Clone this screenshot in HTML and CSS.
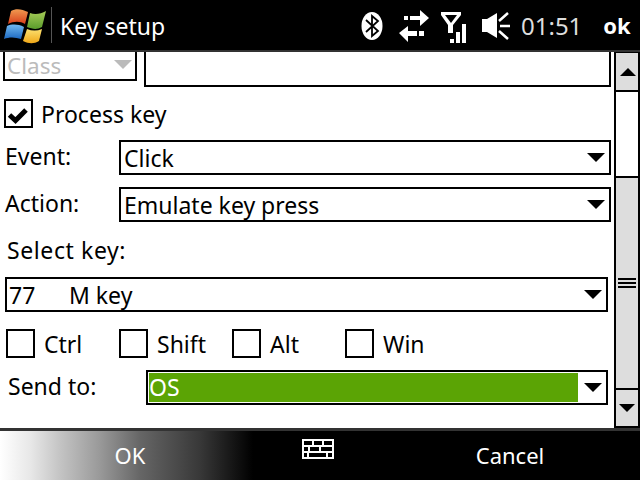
FILE: index.html
```html
<!DOCTYPE html>
<html lang="en">
<head>
    <meta charset="UTF-8">
    <title>Key setup</title>
    <link rel="stylesheet" href="styles.css">
</head>
<body>
    <div class="screen">
        <header class="topbar">
            <svg class="logo" width="44" height="38" viewBox="0 0 44 38">
                <defs>
                    <linearGradient id="red" x1="0" y1="0" x2="0" y2="1"><stop offset="0" stop-color="#f09a50"/><stop offset="1" stop-color="#d8401c"/></linearGradient>
                    <linearGradient id="green" x1="0" y1="0" x2="0" y2="1"><stop offset="0" stop-color="#a8cc58"/><stop offset="1" stop-color="#5a9c2c"/></linearGradient>
                    <linearGradient id="blue" x1="0" y1="0" x2="0" y2="1"><stop offset="0" stop-color="#70b8f0"/><stop offset="1" stop-color="#1c68c0"/></linearGradient>
                    <linearGradient id="yellow" x1="0" y1="0" x2="0" y2="1"><stop offset="0" stop-color="#fce070"/><stop offset="1" stop-color="#f0a818"/></linearGradient>
                </defs>
                <path d="M8 5 C13 2 19 3 25 6 L22 18 C17 15 11 15 5 18 Z" fill="url(#red)"/>
                <path d="M27 7 C32 9 38 8 43 5 L39 21 C34 24 29 23 24 21 Z" fill="url(#green)"/>
                <path d="M4 20 C9 18 15 18 21 21 L18 33 C12 31 6 31 1 33 Z" fill="url(#blue)"/>
                <path d="M24 23 C29 25 34 25 39 23 L36 35 C31 38 26 38 20 35 Z" fill="url(#yellow)"/>
            </svg>
            <span class="divider"></span>
            <span class="title">Key setup</span>
            <svg class="status-icons" width="160" height="50" viewBox="0 0 160 50">
                <ellipse cx="12" cy="26" rx="10.5" ry="14" fill="#fff"/>
                <path d="M6 20 L18 31 L12 36 L12 16 L18 21 L6 32" fill="none" stroke="#000" stroke-width="1.8"/>
                <path d="M44 16 h4 v4 h-4 z M50 16 h10 v-6 l9 8 l-9 8 v-6 h-10 z" fill="#fff"/>
                <path d="M39 33 l9 -7 v5 h9 v5 h-9 v6 z M59 31 h5 v5 h-5 z" fill="#fff"/>
                <path d="M81 12 H101 V15 L93 25 V33 H88 V25 L81 15 Z M85 15 L91 23 L97 15 Z" fill="#fff" fill-rule="evenodd"/>
                <path d="M90 39 h4 v4 h-4 z M96 32 h4 v11 h-4 z M102 24 h4 v19 h-4 z" fill="#fff"/>
                <path d="M122 19 h5 l10 -6 v25 l-10 -6 h-5 z" fill="#fff"/>
                <path d="M139 21 L148 13 M140 26 H150 M139 31 L148 39" stroke="#fff" stroke-width="2.5" fill="none"/>
            </svg>
            <span class="clock">01:51</span>
            <span class="ok">ok</span>
        </header>

        <main class="content">
            <form class="form">
                <div class="row row-class">
                    <div class="combo combo-class"><span>Class</span><i class="arrow arrow-off"></i></div>
                    <div class="textbox"></div>
                </div>

                <label class="check check-main"><span class="box"><svg width="25" height="25" viewBox="0 0 25 25"><path d="M3.5 14 L9.5 19.5 L20 9" fill="none" stroke="#000" stroke-width="5"/></svg></span>Process key</label>

                <div class="row row-event">
                    <span class="field-label">Event:</span>
                    <div class="combo combo-wide"><span>Click</span><i class="arrow"></i></div>
                </div>
                <div class="row row-action">
                    <span class="field-label">Action:</span>
                    <div class="combo combo-wide"><span>Emulate key press</span><i class="arrow"></i></div>
                </div>

                <div class="select-key">Select key:</div>

                <div class="combo combo-key"><span class="key-code">77</span><span>M key</span><i class="arrow"></i></div>

                <div class="mods">
                    <label class="check"><span class="box"></span>Ctrl</label>
                    <label class="check"><span class="box"></span>Shift</label>
                    <label class="check"><span class="box"></span>Alt</label>
                    <label class="check"><span class="box"></span>Win</label>
                </div>

                <div class="row row-send">
                    <span class="field-label">Send to:</span>
                    <div class="combo combo-send"><span class="picked">OS</span><i class="arrow"></i></div>
                </div>
            </form>

            <div class="scrollbar">
                <div class="sb-btn sb-up"><i class="sb-arrow-up"></i></div>
                <div class="sb-track"></div>
                <div class="sb-thumb"><span class="grip"></span></div>
                <div class="sb-btn sb-down"><i class="arrow"></i></div>
            </div>
        </main>

        <footer class="softkeys">
            <div class="softkey softkey-left">OK</div>
            <svg class="sip" width="32" height="20" viewBox="0 0 32 20">
                <path d="M1 1 H31 V19 H1 Z M1 7 H31 M1 13 H31 M11 1 V7 M21 1 V7 M7 7 V13 M18 7 V13 M6 13 V19 M25 13 V19" fill="none" stroke="#fff" stroke-width="2"/>
            </svg>
            <div class="softkey softkey-right">Cancel</div>
        </footer>
    </div>
</body>
</html>
```

FILE: styles.css
```css
body {
    margin: 0;
    background: #000;
    font-family: "Noto Sans", sans-serif;
    font-size: 23px;
    color: #000;
}
.screen {
    width: 640px;
    height: 480px;
    display: flex;
    flex-direction: column;
    overflow: hidden;
}

/* top bar */
.topbar {
    height: 50px;
    flex: none;
    background: #000;
    border-bottom: 2px solid #333;
    color: #fff;
    display: flex;
    align-items: center;
}
.logo {
    margin-left: 3px;
    flex: none;
}
.divider {
    width: 1px;
    height: 36px;
    background: #555;
    margin-left: 4px;
}
.title {
    margin-left: 8px;
    padding-top: 2px;
    font-size: 23px;
    width: 300px;
}
.status-icons {
    flex: none;
}
.clock {
    font-size: 24px;
    margin-left: 1px;
    color: #ddd;
}
.ok {
    font-weight: bold;
    font-size: 22px;
    margin-left: 21px;
}

/* form */
.content {
    flex: 1;
    display: flex;
    background: #fff;
    min-height: 0;
}
.form {
    width: 614px;
    flex: none;
}
.row {
    display: flex;
    align-items: flex-start;
}
.row-class {
    height: 35px;
}
.combo {
    border: 2px solid #000;
    height: 35px;
    box-sizing: border-box;
    display: flex;
    align-items: center;
    position: relative;
    padding-left: 3px;
}
.combo-class {
    width: 134px;
    height: 29px;
    margin-left: 3px;
    border-top: none;
    color: #bbb;
    font-size: 22.5px;
    line-height: 26px;
    padding-left: 2px;
}
.textbox {
    width: 467px;
    height: 35px;
    box-sizing: border-box;
    margin-left: 7px;
    border: 2px solid #000;
    border-top: none;
}
.check-main {
    margin: 12px 0 0 4px;
}
.check {
    display: flex;
    align-items: center;
    gap: 8px;
    height: 29px;
}
.box {
    width: 29px;
    height: 29px;
    box-sizing: border-box;
    border: 2px solid #000;
    flex: none;
    display: flex;
    align-items: center;
    justify-content: center;
}
.row-event {
    margin-top: 12px;
}
.row-action {
    margin-top: 12px;
}
.field-label {
    width: 114px;
    margin-left: 5px;
    height: 33px;
    line-height: 33px;
}
.combo-wide {
    width: 492px;
}
.select-key {
    margin: 12px 0 0 7px;
    height: 32px;
    line-height: 32px;
    letter-spacing: 0.6px;
}
.combo-key {
    margin: 11px 0 0 5px;
    width: 603px;
    padding-left: 2px;
}
.key-code {
    width: 60px;
}
.mods {
    display: grid;
    grid-template-columns: repeat(4, 113px);
    margin: 17px 0 0 6px;
}
.mods .check {
    gap: 9px;
}
.row-send {
    margin-top: 12px;
}
.row-send .field-label {
    width: 138px;
    margin-left: 8px;
}
.combo-send {
    width: 462px;
    padding-left: 1px;
}
.picked {
    width: 429px;
    height: 29px;
    line-height: 29px;
    background: #5ba405;
    color: #fff;
}
.arrow {
    position: absolute;
    right: 4px;
    top: 11px;
    width: 0;
    height: 0;
    border-left: 9px solid transparent;
    border-right: 9px solid transparent;
    border-top: 9px solid #000;
}
.arrow-off {
    border-top-color: #bbb;
    top: 8px;
    right: 3px;
}

/* scrollbar */
.scrollbar {
    width: 22px;
    border: solid #000;
    border-width: 1px 2px 2px;
    display: flex;
    flex-direction: column;
}
.sb-btn {
    height: 36px;
    background: #ddd;
    position: relative;
    flex: none;
}
.sb-up {
    height: 37px;
    border-bottom: 2px solid #000;
}
.sb-arrow-up {
    position: absolute;
    left: 4px;
    top: 15px;
    border-left: 8px solid transparent;
    border-right: 8px solid transparent;
    border-bottom: 8px solid #000;
}
.sb-track {
    height: 84px;
    background: #fff;
}
.sb-thumb {
    height: 210px;
    background: #ddd;
    border-top: 2px solid #000;
    border-bottom: 2px solid #000;
    position: relative;
}
.grip {
    position: absolute;
    left: 2px;
    top: 100px;
    width: 18px;
    height: 10px;
    background: repeating-linear-gradient(#000 0 2px, transparent 2px 4px);
}
.sb-down .arrow {
    right: 3px;
    top: 14px;
    border-left-width: 8px;
    border-right-width: 8px;
    border-top-width: 8px;
}

/* bottom bar */
.softkeys {
    height: 49px;
    flex: none;
    border-top: 3px solid #333;
    background: #000;
    color: #fff;
    display: flex;
    align-items: center;
}
.softkey {
    text-align: center;
    height: 49px;
    line-height: 49px;
    font-size: 22px;
}
.softkey-left {
    width: 260px;
    background: linear-gradient(90deg, #fff 0, #e8e8e8 30px, #c4c4c4 60px, #999 100px, #666 140px, #383838 200px, #000 253px);
}
.sip {
    margin-left: 42px;
    margin-top: -13px;
}
.softkey-right {
    margin-left: 66px;
    width: 220px;
}
```
